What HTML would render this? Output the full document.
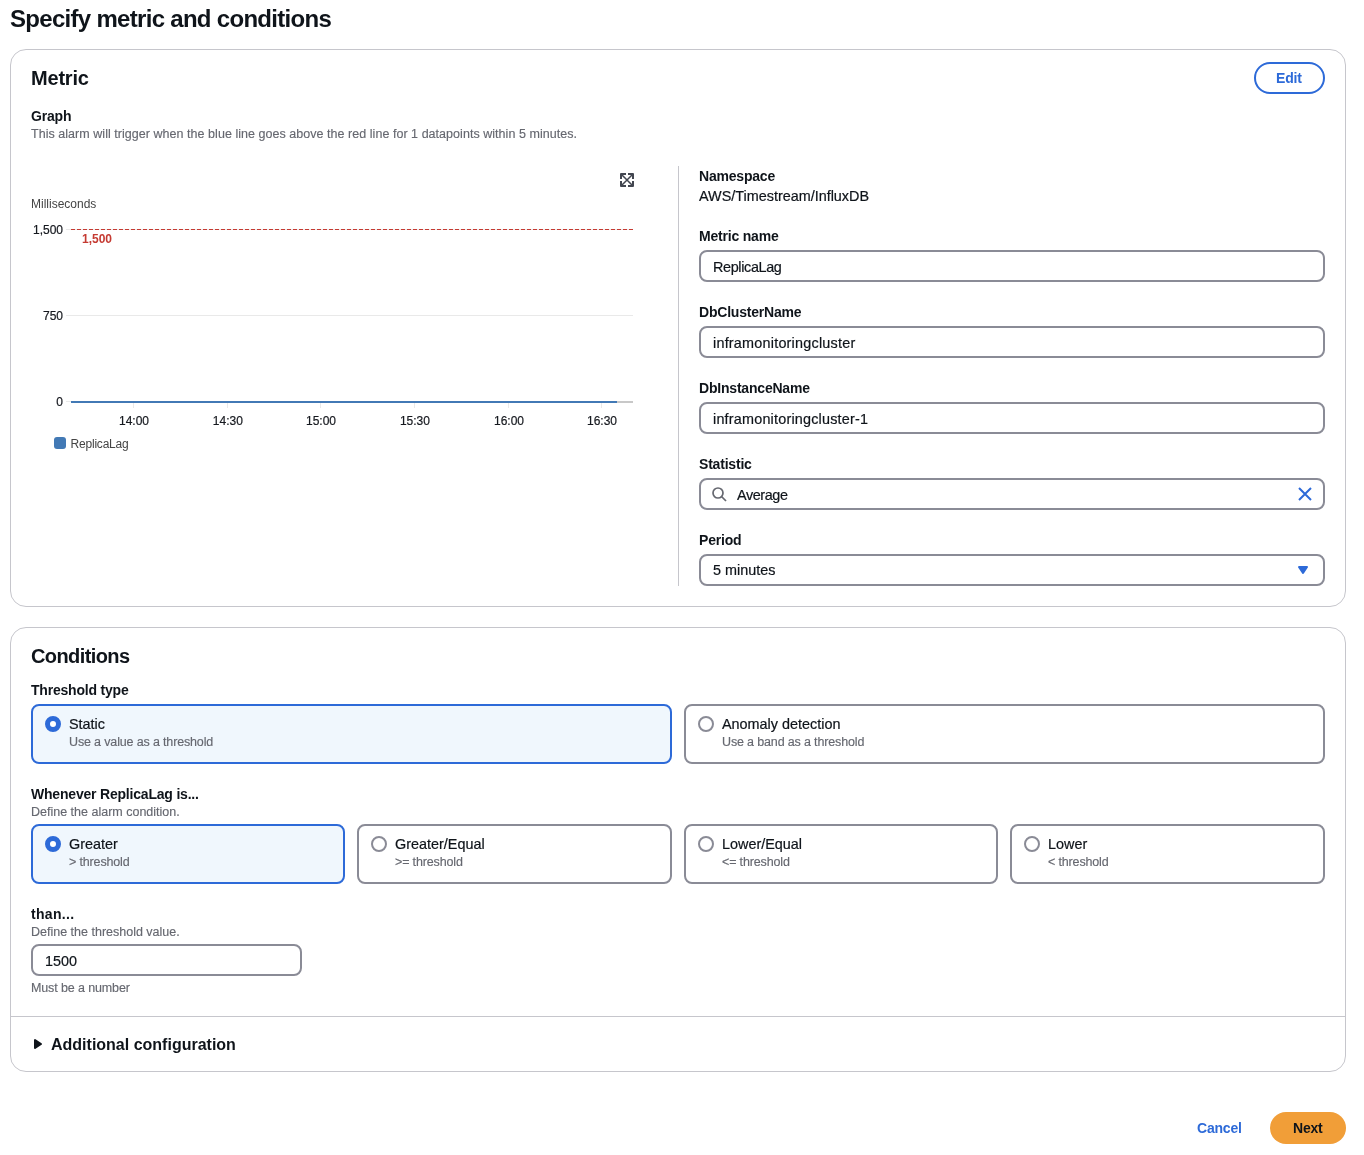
<!DOCTYPE html>
<html>
<head>
<meta charset="utf-8">
<style>
*{box-sizing:border-box;margin:0;padding:0}
html,body{width:1364px;height:1155px;background:#ffffff;overflow:hidden}
body{position:relative;will-change:transform;font-family:"Liberation Sans",sans-serif;color:#0f141a}
.a{position:absolute;white-space:nowrap}
.h1{font-size:24px;line-height:30px;font-weight:700;letter-spacing:-0.7px}
.h2{font-size:20px;line-height:24px;font-weight:700;letter-spacing:-0.4px}
.lb{font-size:14px;line-height:20px;font-weight:700;letter-spacing:-0.2px}
.tx{font-size:14.4px;line-height:20px;-webkit-text-stroke:0.2px currentColor}
.sm{font-size:12.5px;line-height:16px;color:#666870;-webkit-text-stroke:0.15px currentColor}
.ch{font-size:12px;line-height:16px}
.box{position:absolute;border:1px solid #c6c6cc;border-radius:16px;background:#fff}
.inp{position:absolute;border:2px solid #8a8b96;border-radius:8px;background:#fff;height:32px}
.tile{position:absolute;border:2px solid #8a8b96;border-radius:8px;background:#fff;height:60px;top:0}
.tile.sel{border-color:#2d6ad8;background:#f0f7fd}
.rad{position:absolute;left:12px;top:10px;width:16px;height:16px;border-radius:50%;border:2px solid #8a8b96;background:#fff}
.sel .rad{border:5px solid #2d6ad8;background:#fff}
.tt{position:absolute;left:36px;top:8px;font-size:14.4px;line-height:20px;white-space:nowrap;-webkit-text-stroke:0.2px currentColor}
.td{position:absolute;left:36px;top:28px;font-size:12.5px;line-height:16px;color:#666870;white-space:nowrap;letter-spacing:-0.15px;-webkit-text-stroke:0.15px currentColor}
</style>
</head>
<body>

<div class="a h1" style="left:10px;top:4px">Specify metric and conditions</div>

<!-- Metric container -->
<div class="box" style="left:10px;top:49px;width:1336px;height:558px"></div>
<div class="a h2" style="left:31px;top:66px;letter-spacing:-0.2px">Metric</div>
<div class="a" style="left:1254px;top:62px;width:71px;height:32px;border:2px solid #2d6ad8;border-radius:16px"></div>
<div class="a lb" style="left:1276px;top:68px;color:#2d6ad8">Edit</div>

<div class="a lb" style="left:31px;top:106px">Graph</div>
<div class="a sm" style="left:31px;top:126px;letter-spacing:0.04px">This alarm will trigger when the blue line goes above the red line for 1 datapoints within 5 minutes.</div>

<!-- chart -->
<svg class="a" style="left:0;top:0" width="690" height="470" viewBox="0 0 690 470">
<g font-family="Liberation Sans" font-size="12" stroke-width="0.2">
<text x="31" y="208" fill="#444444">Milliseconds</text>
<text x="63" y="234" text-anchor="end" fill="#16191f" stroke="#16191f">1,500</text>
<text x="63" y="320" text-anchor="end" fill="#16191f" stroke="#16191f">750</text>
<text x="63" y="406" text-anchor="end" fill="#16191f" stroke="#16191f">0</text>
<text x="134.0" y="425" text-anchor="middle" fill="#16191f" stroke="#16191f">14:00</text>
<text x="227.8" y="425" text-anchor="middle" fill="#16191f" stroke="#16191f">14:30</text>
<text x="321.0" y="425" text-anchor="middle" fill="#16191f" stroke="#16191f">15:00</text>
<text x="414.9" y="425" text-anchor="middle" fill="#16191f" stroke="#16191f">15:30</text>
<text x="509.0" y="425" text-anchor="middle" fill="#16191f" stroke="#16191f">16:00</text>
<text x="602.0" y="425" text-anchor="middle" fill="#16191f" stroke="#16191f">16:30</text>
<text x="82" y="243" font-weight="700" fill="#c53a32">1,500</text>
<text x="70.5" y="448" fill="#444444" letter-spacing="-0.2">ReplicaLag</text>
</g>
<rect x="66" y="229" width="567" height="1" fill="#e9e9e9"/>
<rect x="66" y="315" width="567" height="1" fill="#e9e9e9"/>
<line x1="71" y1="229.5" x2="633" y2="229.5" stroke="#c53a32" stroke-width="1" stroke-dasharray="4 2"/>
<rect x="133" y="403" width="1" height="5" fill="#e9e9e9"/>
<rect x="227" y="403" width="1" height="5" fill="#e9e9e9"/>
<rect x="320" y="403" width="1" height="5" fill="#e9e9e9"/>
<rect x="414" y="403" width="1" height="5" fill="#e9e9e9"/>
<rect x="508" y="403" width="1" height="5" fill="#e9e9e9"/>
<rect x="601" y="403" width="1" height="5" fill="#e9e9e9"/>
<rect x="66" y="401" width="5" height="1" fill="#e9e9e9"/>
<rect x="71" y="401" width="546" height="2" fill="#4279b5"/>
<rect x="617" y="401" width="16" height="2" fill="#c8c8c8"/>
<rect x="54" y="437" width="12" height="12" rx="3" fill="#4279b5"/>
<g transform="translate(620 173)" fill="none" stroke="#424650">
<path d="M1 6V1H6M8 1H13V6M13 8V13H8M6 13H1V8" stroke-width="2" stroke-linejoin="round"/>
<path d="M2 2L12 12M12 2L2 12" stroke-width="1.5"/>
</g>
</svg>

<!-- divider -->
<div class="a" style="left:678px;top:166px;width:1px;height:420px;background:#c6c6cc"></div>

<!-- right column -->
<div class="a lb" style="left:699px;top:166px">Namespace</div>
<div class="a tx" style="left:699px;top:186px">AWS/Timestream/InfluxDB</div>

<div class="a lb" style="left:699px;top:226px">Metric name</div>
<div class="inp" style="left:699px;top:250px;width:626px"></div>
<div class="a tx" style="left:713px;top:257px;letter-spacing:-0.35px">ReplicaLag</div>

<div class="a lb" style="left:699px;top:302px">DbClusterName</div>
<div class="inp" style="left:699px;top:326px;width:626px"></div>
<div class="a tx" style="left:713px;top:333px;letter-spacing:0.22px">inframonitoringcluster</div>

<div class="a lb" style="left:699px;top:378px">DbInstanceName</div>
<div class="inp" style="left:699px;top:402px;width:626px"></div>
<div class="a tx" style="left:713px;top:409px;letter-spacing:0.2px">inframonitoringcluster-1</div>

<div class="a lb" style="left:699px;top:454px">Statistic</div>
<div class="inp" style="left:699px;top:478px;width:626px"></div>
<div class="a tx" style="left:737px;top:485px;letter-spacing:-0.4px">Average</div>
<svg class="a" style="left:711px;top:486px" width="16" height="16" viewBox="0 0 16 16"><circle cx="7" cy="7" r="5" fill="none" stroke="#666870" stroke-width="1.7"/><path d="M10.5 10.5L15 15" stroke="#666870" stroke-width="1.7"/></svg>
<svg class="a" style="left:1297px;top:486px" width="16" height="16" viewBox="0 0 16 16"><path d="M2 2L14 14M14 2L2 14" stroke="#2d6ad8" stroke-width="2" fill="none"/></svg>

<div class="a lb" style="left:699px;top:530px">Period</div>
<div class="inp" style="left:699px;top:554px;width:626px"></div>
<div class="a tx" style="left:713px;top:560px">5 minutes</div>
<svg class="a" style="left:1295px;top:562px" width="16" height="16" viewBox="0 0 16 16"><path d="M4 5h8l-4 6-4-6z" fill="#2d6ad8" stroke="#2d6ad8" stroke-width="2" stroke-linejoin="round"/></svg>

<!-- Conditions container -->
<div class="box" style="left:10px;top:627px;width:1336px;height:445px"></div>
<div class="a h2" style="left:31px;top:644px;letter-spacing:-0.6px">Conditions</div>
<div class="a lb" style="left:31px;top:680px">Threshold type</div>

<div class="a" style="left:31px;top:704px;width:1294px;height:60px">
  <div class="tile sel" style="left:0;width:641px"><div class="rad"></div><div class="tt">Static</div><div class="td">Use a value as a threshold</div></div>
  <div class="tile" style="left:653px;width:641px"><div class="rad"></div><div class="tt">Anomaly detection</div><div class="td">Use a band as a threshold</div></div>
</div>

<div class="a lb" style="left:31px;top:784px">Whenever ReplicaLag is...</div>
<div class="a sm" style="left:31px;top:804px">Define the alarm condition.</div>

<div class="a" style="left:31px;top:824px;width:1294px;height:60px">
  <div class="tile sel" style="left:0;width:314px"><div class="rad"></div><div class="tt">Greater</div><div class="td">&gt; threshold</div></div>
  <div class="tile" style="left:326px;width:315px"><div class="rad"></div><div class="tt">Greater/Equal</div><div class="td">&gt;= threshold</div></div>
  <div class="tile" style="left:653px;width:314px"><div class="rad"></div><div class="tt">Lower/Equal</div><div class="td">&lt;= threshold</div></div>
  <div class="tile" style="left:979px;width:315px"><div class="rad"></div><div class="tt">Lower</div><div class="td">&lt; threshold</div></div>
</div>

<div class="a lb" style="left:31px;top:904px;letter-spacing:0.3px">than...</div>
<div class="a sm" style="left:31px;top:924px">Define the threshold value.</div>
<div class="inp" style="left:31px;top:944px;width:271px"></div>
<div class="a tx" style="left:45px;top:951px">1500</div>
<div class="a sm" style="left:31px;top:980px;letter-spacing:-0.12px">Must be a number</div>

<div class="a" style="left:11px;top:1016px;width:1334px;height:1px;background:#c6c6cc"></div>
<svg class="a" style="left:30px;top:1036px" width="16" height="16" viewBox="0 0 16 16"><path d="M5 4v8l6-4-6-4z" fill="#0f141a" stroke="#0f141a" stroke-width="2" stroke-linejoin="round"/></svg>
<div class="a lb" style="left:51px;top:1035px;font-size:16px;letter-spacing:0">Additional configuration</div>

<!-- footer buttons -->
<div class="a lb" style="left:1197px;top:1118px;color:#2d6ad8">Cancel</div>
<div class="a" style="left:1270px;top:1112px;width:76px;height:32px;border-radius:16px;background:#f19e38"></div>
<div class="a lb" style="left:1293px;top:1118px">Next</div>

</body>
</html>
